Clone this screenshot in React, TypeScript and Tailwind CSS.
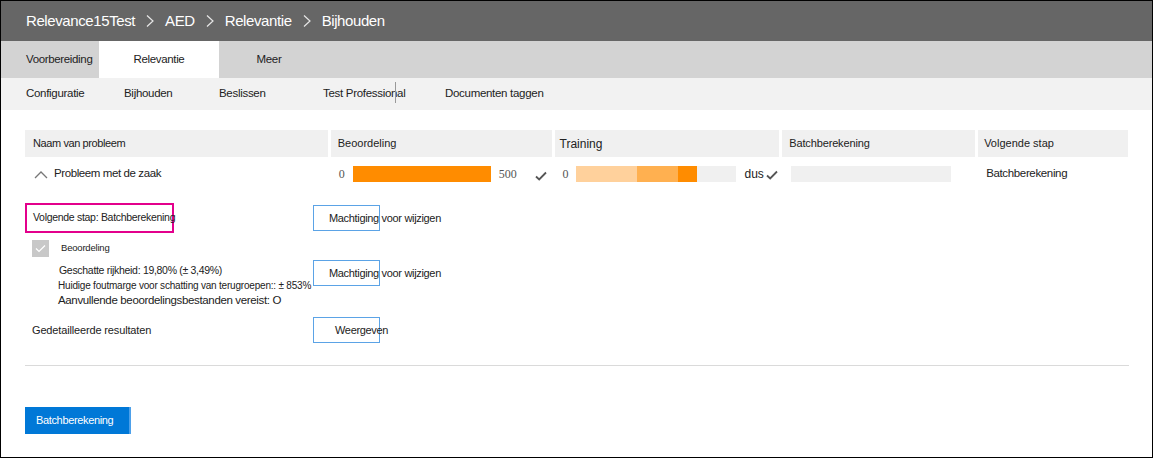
import React from "react";

const FONT = { fontFamily: '"Liberation Sans", Arial, sans-serif' };

const Check = ({ className = "" }: { className?: string }) => (
  <svg width="12" height="10" viewBox="0 0 12 10" className={className}>
    <path d="M1 5.5 L4.2 8.5 L11 1.5" fill="none" stroke="#555" strokeWidth="1.8" />
  </svg>
);

const Chevron = () => (
  <svg width="14" height="9" viewBox="0 0 14 9">
    <path d="M1 8 L7 2 L13 8" fill="none" stroke="#777" strokeWidth="1.3" />
  </svg>
);

const OutlineButton = ({ label, pad }: { label: string; pad: string }) => (
  <div className={`flex h-[26px] w-[67px] shrink-0 items-center whitespace-nowrap border border-[#5ba3e6] text-[11px] tracking-[-0.33px] text-[#222] ${pad}`}>
    {label}
  </div>
);

const App: React.FC = () => {
  const crumbs = ["Relevance15Test", "AED", "Relevantie", "Bijhouden"];
  const subnav = [
    { label: "Configuratie", w: "w-[98px]" },
    { label: "Bijhouden", w: "w-[95px]" },
    { label: "Beslissen", w: "w-[104px]" },
    { label: "Test Professional", w: "w-[122px]" },
    { label: "Documenten taggen", w: "" },
  ];

  return (
    <div className="h-[458px] w-[1153px] overflow-hidden border border-black bg-white" style={FONT}>
      {/* breadcrumb header */}
      <div className="flex h-[40px] items-center bg-[#666666] pl-[25px] text-[15px] tracking-[-0.4px] text-white">
        {crumbs.map((c, i) => (
          <React.Fragment key={c}>
            {i > 0 && (
              <svg width="10" height="14" viewBox="0 0 10 14" className="mx-[10px]">
                <path d="M2 1.5 L8 7 L2 12.5" fill="none" stroke="#e6e6e6" strokeWidth="1.2" />
              </svg>
            )}
            <span>{c}</span>
          </React.Fragment>
        ))}
      </div>

      {/* tabs */}
      <div className="flex h-[37px] bg-[#d3d3d3] text-[11.5px] tracking-[-0.35px] text-[#222]">
        <div className="flex w-[98px] items-center whitespace-nowrap pl-[25px]">Voorbereiding</div>
        <div className="flex w-[120px] items-center justify-center bg-white">Relevantie</div>
        <div className="flex w-[100px] items-center justify-center">Meer</div>
      </div>

      {/* sub navigation */}
      <div className="flex h-[32px] items-center bg-[#f2f2f2] pl-[25px] text-[11.5px] tracking-[-0.3px] text-[#222]">
        {subnav.map((s, i) => (
          <div key={s.label} className={`relative flex h-full items-center whitespace-nowrap ${s.w}`}>
            {s.label}
            {i === 3 && <div className="absolute left-[72px] top-[4px] h-[21px] w-px bg-[#999]" />}
          </div>
        ))}
      </div>

      <div className="px-[24px] pt-[20px]">
        {/* table header */}
        <div className="flex h-[27px] gap-[3px] text-[11px] text-[#222]">
          <div className="flex w-[303px] items-center bg-[#f0f0f0] pl-[8px] tracking-[-0.4px]">Naam van probleem</div>
          <div className="flex w-[221px] items-center bg-[#f0f0f0] pl-[7px]">Beoordeling</div>
          <div className="flex w-[225px] items-center bg-[#f0f0f0] pl-[5px] text-[12px]">Training</div>
          <div className="flex w-[193px] items-center bg-[#f0f0f0] pl-[7px] tracking-[-0.15px]">Batchberekening</div>
          <div className="flex w-[150px] items-center bg-[#f0f0f0] pl-[6px]">Volgende stap</div>
        </div>

        {/* row */}
        <div className="mt-[3px] flex h-[28px] items-center gap-[3px] text-[#222]">
          <div className="flex w-[303px] items-center gap-[6px] pl-[9px] text-[11.5px] tracking-[-0.4px]">
            <Chevron />
            <span>Probleem met de zaak</span>
          </div>
          <div className="flex w-[221px] items-center pl-[8px]">
            <span className="w-[14px] font-['Liberation_Serif'] text-[12px] text-[#555]">0</span>
            <div className="h-[16px] w-[138px] bg-[#ff8c00]" />
            <span className="ml-[8px] font-['Liberation_Serif'] text-[12px] text-[#555]">500</span>
            <Check className="ml-[18px] mt-[3px]" />
          </div>
          <div className="flex w-[225px] items-center pl-[8px]">
            <span className="w-[13px] font-['Liberation_Serif'] text-[12px] text-[#555]">0</span>
            <div className="flex h-[16px] w-[160px] bg-[#f0f0f0]">
              <div className="h-full w-[61px] bg-[#ffd19c]" />
              <div className="h-full w-[41px] bg-[#ffb050]" />
              <div className="h-full w-[19px] bg-[#ff8c00]" />
            </div>
            <span className="ml-[9px] text-[12px]">dus</span>
            <Check className="ml-[2px] mt-[2px]" />
          </div>
          <div className="flex w-[193px] items-center pl-[9px]">
            <div className="h-[16px] w-[160px] bg-[#f0f0f0]" />
          </div>
          <div className="flex w-[150px] items-center pl-[8px] text-[11.5px] tracking-[-0.35px]">Batchberekening</div>
        </div>

        {/* details */}
        <div className="mt-[15px] flex items-center">
          <div className="w-[288px]">
            <div className="flex h-[30px] w-[149px] items-center whitespace-nowrap border-2 border-[#e3008c] pl-[6px] text-[10.5px] tracking-[-0.3px] text-[#222]">
              Volgende stap: Batchberekening
            </div>
          </div>
          <OutlineButton label="Machtiging voor wijzigen" pad="pl-[15px]" />
        </div>

        <div className="mt-[7px] flex">
          <div className="w-[288px] pl-[7px] text-[#222]">
            <div className="flex items-center gap-[12px]">
              <div className="flex h-[17px] w-[17px] items-center justify-center bg-[#c8c8c8]">
                <svg width="11" height="9" viewBox="0 0 11 9">
                  <path d="M1 4.5 L4 7.5 L10 1.5" fill="none" stroke="#fff" strokeWidth="1.2" />
                </svg>
              </div>
              <span className="text-[9.5px] tracking-[-0.2px]">Beoordeling</span>
            </div>
            <div className="mt-[5px] whitespace-nowrap pl-[27px] text-[10.5px] leading-[16px] tracking-[-0.3px]">
              Geschatte rijkheid: 19,80% (± 3,49%)
            </div>
            <div className="whitespace-nowrap pl-[26px] text-[10px] leading-[15px] tracking-[-0.2px]">
              Huidige foutmarge voor schatting van terugroepen:: ± 853%
            </div>
            <div className="whitespace-nowrap pl-[26px] text-[11.5px] leading-[15px] tracking-[-0.35px]">
              Aanvullende beoordelingsbestanden vereist: O
            </div>
          </div>
          <div className="mt-[20px]">
            <OutlineButton label="Machtiging voor wijzigen" pad="pl-[15px]" />
          </div>
        </div>

        <div className="mt-[9px] flex items-center">
          <div className="w-[288px] whitespace-nowrap pl-[7px] text-[11px] tracking-[-0.15px] text-[#222]">
            Gedetailleerde resultaten
          </div>
          <OutlineButton label="Weergeven" pad="pl-[21px] text-[11.5px]" />
        </div>

        <div className="mt-[22px] h-px w-[1104px] bg-[#dadada]" />

        <div className="mt-[41px] flex h-[27px] w-[106px] items-center whitespace-nowrap border-r-2 border-[#4da0ea] bg-[#0078d7] pl-[11px] text-[11px] tracking-[-0.35px] text-white">
          Batchberekening
        </div>
      </div>
    </div>
  );
};

export default App;
